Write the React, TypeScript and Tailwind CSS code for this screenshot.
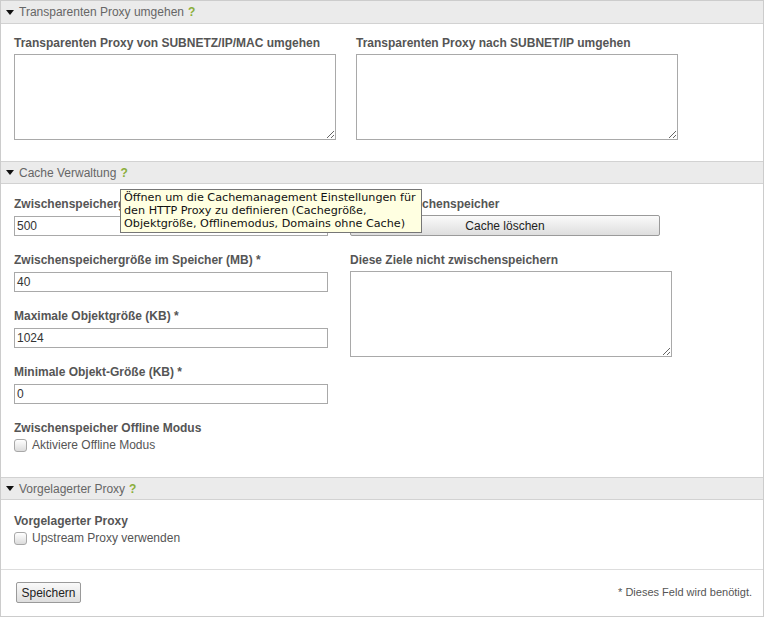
import type { ReactNode } from 'react';

function SectionHeader({ title, first }: { title: string; first?: boolean }) {
  return (
    <div
      className={`flex h-[23px] items-center border-b border-[#d2d2d2] bg-[#ebebeb] pl-[5px] text-[12px] text-[#666] ${
        first ? '' : 'border-t'
      }`}
    >
      <svg width="8" height="5" viewBox="0 0 8 5" className="mr-[5px]">
        <path d="M0 0h8L4 5z" fill="#111" />
      </svg>
      <span>{title}</span>
      <span className="ml-[4px] font-bold text-[#8aae3a]">?</span>
    </div>
  );
}

function Label({ children }: { children: ReactNode }) {
  return <div className="h-[15px] text-[12px] font-bold leading-[15px] text-[#555]">{children}</div>;
}

function TextInput({ value }: { value: string }) {
  return (
    <div className="mt-[4px] mb-[17px] flex h-[20px] w-[314px] items-center border border-[#a9a9a9] bg-white px-[2px] text-[12px] text-[#333]">
      {value}
    </div>
  );
}

function Area({ w }: { w: string }) {
  return (
    <textarea
      readOnly
      className={`mt-[3px] block h-[86px] ${w} border border-[#a9a9a9] bg-white outline-none`}
    />
  );
}

function Check({ label }: { label: string }) {
  return (
    <div className="flex h-[16px] items-center text-[12px] text-[#555]">
      <span className="mr-[5px] inline-block h-[13px] w-[13px] rounded-[3px] border border-[#a8a8a8] bg-gradient-to-b from-white to-[#dcdcdc]" />
      {label}
    </div>
  );
}

export default function App() {
  return (
    <div className="bg-white" style={{ fontFamily: '"Liberation Sans", Arial, sans-serif' }}>
      <div className="relative w-[764px] border border-[#cccccc]">
        <SectionHeader title="Transparenten Proxy umgehen" first />
        <div className="flex gap-[20px] pt-[12px] pb-[21px] pl-[13px]">
          <div>
            <Label>Transparenten Proxy von SUBNETZ/IP/MAC umgehen</Label>
            <Area w="w-[322px]" />
          </div>
          <div>
            <Label>Transparenten Proxy nach SUBNET/IP umgehen</Label>
            <Area w="w-[322px]" />
          </div>
        </div>

        <SectionHeader title="Cache Verwaltung" />
        <div className="pt-[13px] pb-[24px] pl-[13px]">
          <div className="flex gap-[22px]">
            <div className="w-[314px]">
              <Label>Zwischenspeichergröße auf der Festplatte (MB) *</Label>
              <TextInput value="500" />
              <Label>Zwischenspeichergröße im Speicher (MB) *</Label>
              <TextInput value="40" />
              <Label>Maximale Objektgröße (KB) *</Label>
              <TextInput value="1024" />
              <Label>Minimale Objekt-Größe (KB) *</Label>
              <TextInput value="0" />
            </div>
            <div>
              <Label>Lösche Zwischenspeicher</Label>
              <button className="mt-[3px] mb-[17px] block h-[21px] w-[310px] rounded-[2px] border border-[#9a9a9a] bg-gradient-to-b from-[#fafafa] to-[#dedede] text-[12px] text-[#222]">
                Cache löschen
              </button>
              <Label>Diese Ziele nicht zwischenspeichern</Label>
              <Area w="w-[322px]" />
            </div>
          </div>
          <Label>Zwischenspeicher Offline Modus</Label>
          <div className="mt-[1px]">
            <Check label="Aktiviere Offline Modus" />
          </div>
        </div>

        <SectionHeader title="Vorgelagerter Proxy" />
        <div className="border-b border-[#dddddd] pt-[14px] pb-[23px] pl-[13px]">
          <Label>Vorgelagerter Proxy</Label>
          <div className="mt-[1px]">
            <Check label="Upstream Proxy verwenden" />
          </div>
        </div>

        <div className="flex items-center justify-between pt-[12px] pb-[13px] pl-[15px] pr-[11px]">
          <button className="h-[21px] w-[65px] rounded-[2px] border border-[#9a9a9a] bg-gradient-to-b from-[#fafafa] to-[#dedede] text-[12px] text-[#222]">
            Speichern
          </button>
          <span className="text-[11px] text-[#555]">* Dieses Feld wird benötigt.</span>
        </div>

        <div
          className="absolute left-[119px] top-[188px] w-[302px] border border-[#767676] bg-[#ffffe1] px-[3px] pt-[1px] pb-[2px] text-[11.2px] leading-[13px] text-[#111]"
          style={{ fontFamily: '"DejaVu Sans", Verdana, sans-serif' }}
        >
          Öffnen um die Cachemanagement Einstellungen für
          <br />
          den HTTP Proxy zu definieren (Cachegröße,
          <br />
          Objektgröße, Offlinemodus, Domains ohne Cache)
        </div>
      </div>
    </div>
  );
}
